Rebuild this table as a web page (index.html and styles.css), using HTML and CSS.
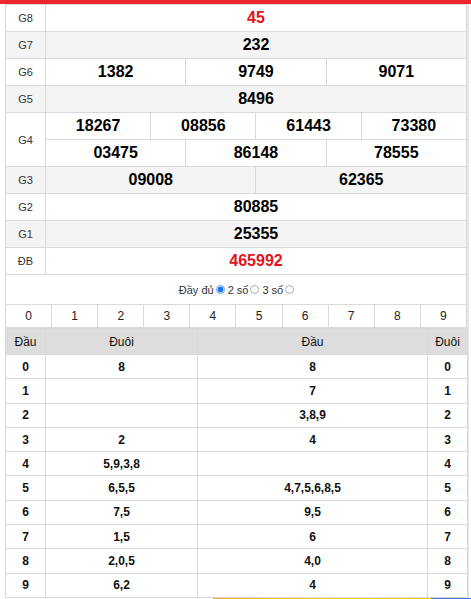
FILE: index.html
```html
<!DOCTYPE html>
<html lang="vi">
<head>
<meta charset="utf-8">
<title>Kết quả</title>
<link rel="stylesheet" href="styles.css">
</head>
<body>
<div class="topbar"></div>
<div class="wrap">
  <table class="kq">
    <colgroup><col class="c-lbl"><col span="12"></colgroup>
    <tr><td class="lbl">G8</td><td colspan="12" class="num red">45</td></tr>
    <tr class="alt"><td class="lbl">G7</td><td colspan="12" class="num">232</td></tr>
    <tr><td class="lbl">G6</td><td colspan="4" class="num">1382</td><td colspan="4" class="num">9749</td><td colspan="4" class="num">9071</td></tr>
    <tr class="alt"><td class="lbl">G5</td><td colspan="12" class="num">8496</td></tr>
    <tr><td class="lbl" rowspan="2">G4</td><td colspan="3" class="num">18267</td><td colspan="3" class="num">08856</td><td colspan="3" class="num">61443</td><td colspan="3" class="num">73380</td></tr>
    <tr><td colspan="4" class="num">03475</td><td colspan="4" class="num">86148</td><td colspan="4" class="num">78555</td></tr>
    <tr class="alt"><td class="lbl">G3</td><td colspan="6" class="num">09008</td><td colspan="6" class="num">62365</td></tr>
    <tr><td class="lbl">G2</td><td colspan="12" class="num">80885</td></tr>
    <tr class="alt"><td class="lbl">G1</td><td colspan="12" class="num">25355</td></tr>
    <tr><td class="lbl">ĐB</td><td colspan="12" class="num red">465992</td></tr>
  </table>

  <div class="opts">
    <span>Đầy đủ</span><span class="radio on"></span>
    <span>2 số</span><span class="radio"></span>
    <span>3 số</span><span class="radio"></span>
  </div>

  <table class="digits">
    <tr><td>0</td><td>1</td><td>2</td><td>3</td><td>4</td><td>5</td><td>6</td><td>7</td><td>8</td><td>9</td></tr>
  </table>

  <table class="loto">
    <colgroup><col class="l1"><col class="l2"><col class="l3"><col class="l4"></colgroup>
    <tr class="head"><th>Đầu</th><th>Đuôi</th><th>Đầu</th><th>Đuôi</th></tr>
    <tr><td>0</td><td>8</td><td>8</td><td>0</td></tr>
    <tr><td>1</td><td></td><td>7</td><td>1</td></tr>
    <tr><td>2</td><td></td><td>3,8,9</td><td>2</td></tr>
    <tr><td>3</td><td>2</td><td>4</td><td>3</td></tr>
    <tr><td>4</td><td>5,9,3,8</td><td></td><td>4</td></tr>
    <tr><td>5</td><td>6,5,5</td><td>4,7,5,6,8,5</td><td>5</td></tr>
    <tr><td>6</td><td>7,5</td><td>9,5</td><td>6</td></tr>
    <tr><td>7</td><td>1,5</td><td>6</td><td>7</td></tr>
    <tr><td>8</td><td>2,0,5</td><td>4,0</td><td>8</td></tr>
    <tr><td>9</td><td>6,2</td><td>4</td><td>9</td></tr>
  </table>
</div>
<div class="strip"><span class="s-yellow"></span><span class="s-blue"></span></div>
</body>
</html>
```

FILE: styles.css
```css
html, body {
  margin: 0;
  padding: 0;
  background: #fff;
  font-family: "Liberation Sans", Arial, sans-serif;
  color: #222;
}

.topbar {
  height: 4px;
  background: #ee262c;
}

.wrap {
  margin-left: 5px;
  width: 462px;
  box-shadow: 2px 0 0 #e6e6e6;
}

table {
  border-collapse: collapse;
  width: 462px;
  table-layout: fixed;
}

td, th {
  border: 1px solid #d9d9d9;
  padding: 0;
  text-align: center;
}

.kq .c-lbl { width: 40px; }

.kq td {
  height: 26px;
}

.kq tr.alt td {
  background: #f4f4f4;
}

.kq .lbl {
  font-size: 11px;
  color: #333;
}

.kq .num {
  font-size: 16px;
  font-weight: bold;
  color: #000;
}

.kq .num.red {
  color: #e3141b;
}

.opts {
  border-left: 1px solid #d9d9d9;
  border-right: 1px solid #d9d9d9;
  display: flex;
  align-items: center;
  justify-content: center;
  gap: 2px;
  font-size: 11px;
  color: #333;
  box-sizing: border-box;
  height: 29px;
}

.opts span:not(.radio) {
  margin-left: 1px;
}

.radio {
  display: inline-block;
  width: 7px;
  height: 7px;
  border: 1px solid #aaa;
  border-radius: 50%;
  background: #fff;
  box-sizing: content-box;
}

.radio.on {
  border-color: #5b9bd5;
  background: radial-gradient(circle, #1a73e8 0 2.6px, #fff 3.2px);
}

.digits td {
  height: 22px;
  font-size: 12px;
  color: #222;
}

.loto .l1 { width: 40px; }
.loto .l2 { width: 152px; }
.loto .l3 { width: 230px; }
.loto .l4 { width: 40px; }

.loto th {
  background: #dddddd;
  height: 25px;
  font-size: 12px;
  font-weight: normal;
  color: #111;
}

.loto td {
  height: 23.3px;
  font-size: 12px;
  font-weight: bold;
  color: #111;
}

.strip {
  display: flex;
  margin-top: 0;
  height: 3px;
}

.s-yellow {
  margin-left: 213px;
  width: 218px;
  background: linear-gradient(90deg, #f5a623, #ffd230 60%, #f7c51c);
}

.s-blue {
  flex: 1;
  background: #3a7bd5;
}
```
